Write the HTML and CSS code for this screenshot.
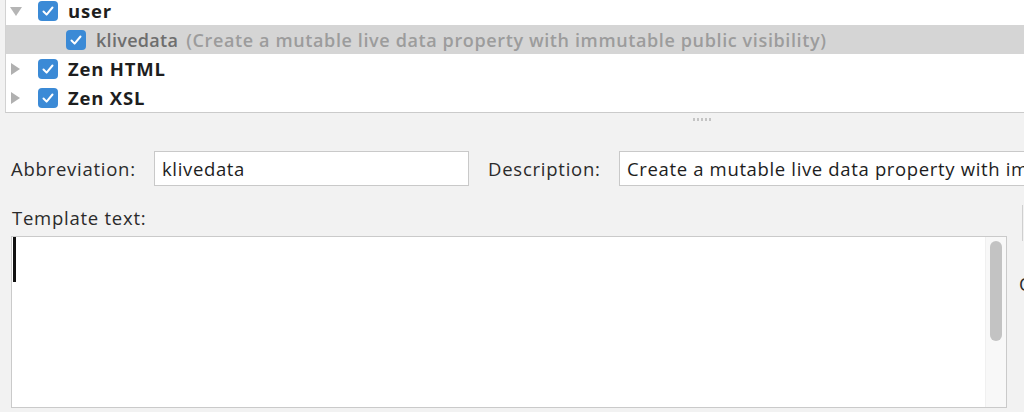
FILE: index.html
```html
<!DOCTYPE html>
<html>
<head>
<meta charset="utf-8">
<link rel="stylesheet" href="styles.css">
</head>
<body>
<div class="page">
  <div class="tree">
    <div class="tree-inner">
      <div class="row">
        <span class="twisty down"></span>
        <span class="cb"><svg viewBox="0 0 20 20" width="20" height="20"><path d="M5.5 10.5 L8.6 13.6 L14.5 6.5" fill="none" stroke="#fff" stroke-width="2" stroke-linecap="round" stroke-linejoin="round"/></svg></span>
        <span class="name">user</span>
      </div>
      <div class="row selected child">
        <span class="cb"><svg viewBox="0 0 20 20" width="20" height="20"><path d="M5.5 10.5 L8.6 13.6 L14.5 6.5" fill="none" stroke="#fff" stroke-width="2" stroke-linecap="round" stroke-linejoin="round"/></svg></span>
        <span class="name muted">klivedata</span>
        <span class="desc">(Create a mutable live data property with immutable public visibility)</span>
      </div>
      <div class="row">
        <span class="twisty right"></span>
        <span class="cb"><svg viewBox="0 0 20 20" width="20" height="20"><path d="M5.5 10.5 L8.6 13.6 L14.5 6.5" fill="none" stroke="#fff" stroke-width="2" stroke-linecap="round" stroke-linejoin="round"/></svg></span>
        <span class="name">Zen HTML</span>
      </div>
      <div class="row">
        <span class="twisty right"></span>
        <span class="cb"><svg viewBox="0 0 20 20" width="20" height="20"><path d="M5.5 10.5 L8.6 13.6 L14.5 6.5" fill="none" stroke="#fff" stroke-width="2" stroke-linecap="round" stroke-linejoin="round"/></svg></span>
        <span class="name">Zen XSL</span>
      </div>
    </div>
  </div>
  <div class="splitter"><span class="grip"></span></div>
  <div class="form">
    <div class="fields">
      <label class="label abbr-label">Abbreviation:</label>
      <div class="input abbr">klivedata</div>
      <label class="label desc-label">Description:</label>
      <div class="input descin">Create a mutable live data property with immutable public visibility</div>
    </div>
    <div class="label tpl-label">Template text:</div>
    <div class="editor-row">
      <div class="textarea">
        <span class="caret"></span>
        <div class="scroll"><span class="thumb"></span></div>
      </div>
      <div class="side">
        <div class="side-btn"></div>
        <div class="side-text">Options</div>
      </div>
    </div>
  </div>
</div>
</body>
</html>
```

FILE: styles.css
```css
html, body {
  margin: 0;
  padding: 0;
}
body {
  background: #f2f2f2;
  width: 1024px;
  height: 412px;
  overflow: hidden;
  font-family: "Open Sans", "Noto Sans", sans-serif;
  color: #262626;
}
.page {
  width: 1024px;
  height: 412px;
  overflow: hidden;
}
.tree {
  margin-left: 5px;
  height: 113px;
  box-sizing: border-box;
  border-left: 1px solid #d2d2d2;
  border-bottom: 1px solid #cbcbcb;
  background: #ffffff;
  overflow: hidden;
}
.tree-inner {
  margin-top: -4px;
}
.row {
  display: flex;
  align-items: center;
  height: 29px;
  padding-left: 4px;
  white-space: nowrap;
}
.row.child {
  padding-left: 60px;
}
.row.selected {
  background: #d5d5d5;
}
.twisty {
  width: 12px;
  height: 12px;
  margin-right: 16px;
  position: relative;
}
.twisty.down::before {
  content: "";
  position: absolute;
  left: 0;
  top: 2px;
  border-left: 6px solid transparent;
  border-right: 6px solid transparent;
  border-top: 9px solid #b5b5b5;
}
.twisty.right::before {
  content: "";
  position: absolute;
  left: 1px;
  top: 0;
  border-top: 6px solid transparent;
  border-bottom: 6px solid transparent;
  border-left: 9px solid #b0b0b0;
}
.cb {
  width: 20px;
  height: 20px;
  border-radius: 4px;
  background: #3b8ad6;
  display: inline-flex;
  margin-right: 10px;
  flex: none;
}
.name {
  font-weight: 700;
  font-size: 18.5px;
  letter-spacing: 0.8px;
  color: #1e1e1e;
}
.name.muted {
  font-weight: 600;
  font-size: 18px;
  letter-spacing: 0.3px;
  color: #6e6e6e;
}
.desc {
  margin-left: 8px;
  font-weight: 600;
  font-size: 18px;
  letter-spacing: 0.62px;
  color: #9c9c9c;
}
.splitter {
  height: 12px;
  display: flex;
  justify-content: center;
  align-items: center;
  padding-left: 380px;
}
.grip {
  width: 18px;
  height: 3px;
  background: repeating-linear-gradient(90deg, #c4c4c4 0 2px, transparent 2px 4px);
}
.form {
  padding-left: 11px;
}
.fields {
  display: flex;
  align-items: center;
  margin-top: 26px;
  height: 35px;
}
.label {
  font-size: 18.5px;
  letter-spacing: 0.75px;
  color: #2b2b2b;
}
.abbr-label {
  width: 143px;
  flex: none;
}
.input {
  box-sizing: border-box;
  height: 35px;
  background: #fff;
  border: 1px solid #c9c9c9;
  display: flex;
  align-items: center;
  padding-left: 7px;
  font-size: 18.5px;
  letter-spacing: 0.65px;
  color: #1d1d1d;
  white-space: nowrap;
  overflow: hidden;
  flex: none;
}
.abbr {
  width: 315px;
}
.desc-label {
  margin-left: 19px;
  width: 131px;
  flex: none;
}
.descin {
  width: 460px;
}
.tpl-label {
  margin-top: 20px;
  height: 24px;
  line-height: 24px;
  padding-left: 1px;
}
.editor-row {
  display: flex;
  margin-top: 6px;
}
.textarea {
  box-sizing: border-box;
  width: 996px;
  height: 172px;
  background: #fff;
  border: 1px solid #cacaca;
  display: flex;
  justify-content: space-between;
  flex: none;
}
.caret {
  width: 3px;
  height: 45px;
  background: #111;
  margin-left: 1px;
}
.scroll {
  width: 21px;
  background: #f8f8f8;
  border-left: 1px solid #f0f0f0;
  display: flex;
  justify-content: center;
  padding-top: 4px;
  box-sizing: border-box;
}
.thumb {
  width: 12px;
  height: 100px;
  border-radius: 6px;
  background: #c3c3c3;
}
.side {
  margin-left: 15px;
  margin-top: -31px;
  flex: none;
}
.side-btn {
  width: 40px;
  height: 36px;
  border-left: 1px solid #cfcfcf;
  box-sizing: border-box;
}
.side-text {
  margin-top: 30px;
  margin-left: -3px;
  font-size: 18.5px;
  color: #2b2b2b;
}
```
